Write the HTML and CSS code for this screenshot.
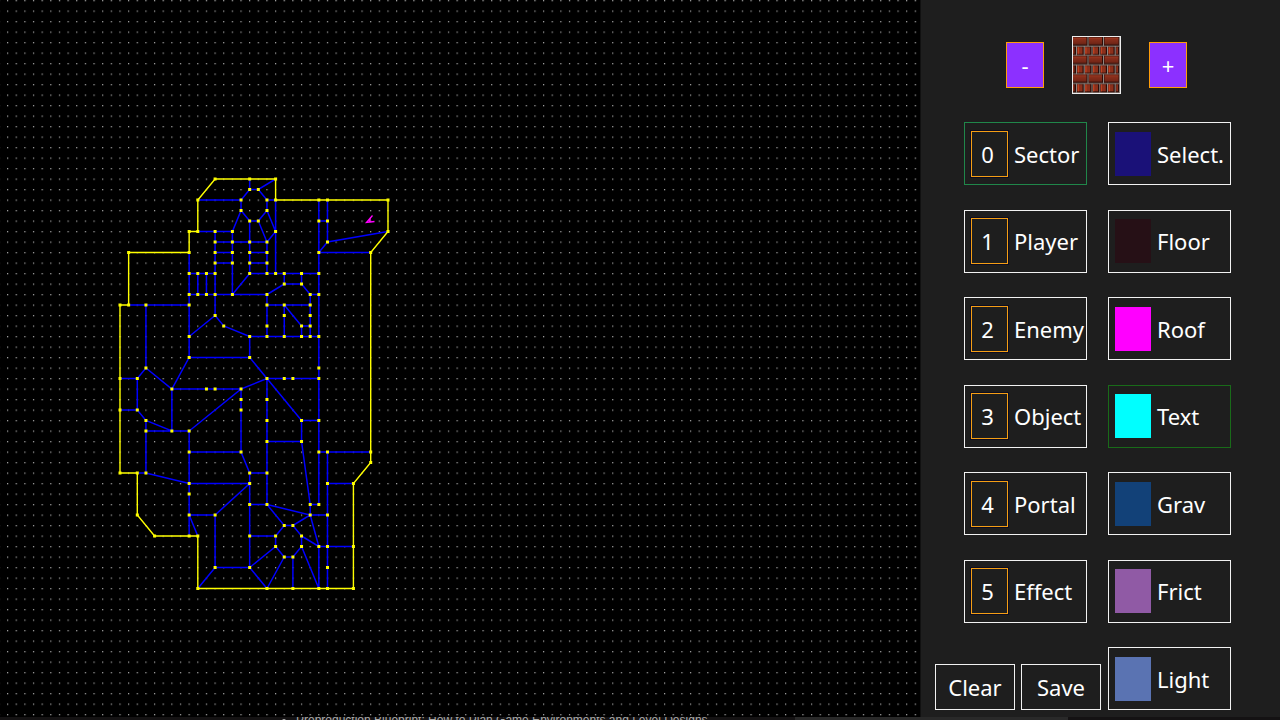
FILE: index.html
```html
<!DOCTYPE html>
<html lang="en">
<head>
<meta charset="utf-8">
<title>Level editor</title>
<link rel="stylesheet" href="styles.css">
</head>
<body>
<div class="editor">
  <main class="map">
    <svg class="map-canvas" role="img" aria-label="Level map">
      <defs>
        <pattern id="grid-dots" width="8.645" height="10.5" patternUnits="userSpaceOnUse" patternTransform="translate(7 0)">
          <rect class="grid-dot" width="1.2" height="1.3"/>
        </pattern>
      </defs>
      <rect width="100%" height="100%" fill="url(#grid-dots)"/>
      <!-- Map coordinates are whole grid cells -->
      <g transform="translate(120 179) scale(8.645 10.5)">
        <path class="portal-line" d="M9 2H14V3L13 5M14 2L15 1M15 0V1H16L18 0M16 1L17 2H18M17 2V3L16 4L17 6M17 3L18 5L17 6M14 3L15 4H16M18 2V9M9 5H13V11M11 5V13M11 6H17M11 7H13M11 8H13M15 4V9H23M15 7H17M15 8H17M17 6V9M15 9L13 11M8 7V17M8 9H11M9 9V11M10 9V11M8 11H17M1 12H8M3 12V18"/>
        <path class="portal-line" d="M23 2V31M24 2V6M23 4H24M31 5L24 6L23 7H29M19 9V10H21V9M19 10L17 11V15M21 10L22 11H23M22 11V15M17 12H22M19 12V15M19 12L21 14H22M21 14V15M15 15H23"/>
        <path class="portal-line" d="M8 15L11 13L12 14L15 15V17L17 19M15 17H8L6 20L3 18L2 19H0M2 19V22H0M2 22L3 23L6 24V20H14L8 24V34M3 23V28M3 24H8M17 19L14 20V26L15 28H17M17 19H23M17 19V31M17 19L21 23H23M21 23V25H17M21 25L22 31"/>
        <path class="portal-line" d="M8 26H14M2 28H3L8 29H15L11 32H8L9 34M11 32V37H15M11 37L9 39M15 28V37M15 31H17M15 34H18M18 35L15 37L17 39M23 26H29M24 26V39M24 29H27M17 31L22 32L20 33H19L17 31M23 31H22V32H24M22 32L23 35H27M19 33L18 34V35L19 36H20L21 35V34L20 33M21 34L23 35V39L21 35M19 36L17 39M20 36V39"/>
        <path class="wall-line" d="M11 0H18V2H31V5L29 7V27L27 29V39H9V34H4L2 32V28H0V12H1V7H8V5H9V2Z"/>
        <path class="vertex" d="M11 0h0M15 0h0M18 0h0M15 1h0M16 1h0M9 2h0M14 2h0M17 2h0M18 2h0M23 2h0M24 2h0M31 2h0M14 3h0M17 3h0M15 4h0M16 4h0M23 4h0M24 4h0M8 5h0M9 5h0M11 5h0M13 5h0M18 5h0M31 5h0M11 6h0M13 6h0M15 6h0M17 6h0M24 6h0M1 7h0M8 7h0M11 7h0M13 7h0M15 7h0M17 7h0M23 7h0M29 7h0M11 8h0M13 8h0M15 8h0M17 8h0M8 9h0M9 9h0M10 9h0M11 9h0M15 9h0M17 9h0M18 9h0M19 9h0M21 9h0M23 9h0M19 10h0M21 10h0M8 11h0M9 11h0M10 11h0M11 11h0M13 11h0M17 11h0M22 11h0M23 11h0"/>
        <path class="vertex" d="M0 12h0M1 12h0M3 12h0M8 12h0M17 12h0M19 12h0M22 12h0M11 13h0M19 13h0M22 13h0M12 14h0M17 14h0M21 14h0M22 14h0M8 15h0M15 15h0M17 15h0M19 15h0M21 15h0M22 15h0M23 15h0M8 17h0M15 17h0M3 18h0M23 18h0M0 19h0M2 19h0M17 19h0M19 19h0M20 19h0M23 19h0M6 20h0M10 20h0M11 20h0M14 20h0M14 21h0M17 21h0M0 22h0M2 22h0M14 22h0M3 23h0M17 23h0M21 23h0M23 23h0M3 24h0M6 24h0M8 24h0M17 25h0M21 25h0"/>
        <path class="vertex" d="M8 26h0M14 26h0M23 26h0M24 26h0M29 26h0M29 27h0M0 28h0M2 28h0M3 28h0M15 28h0M17 28h0M8 29h0M15 29h0M24 29h0M27 29h0M8 30h0M15 31h0M17 31h0M22 31h0M23 31h0M2 32h0M8 32h0M11 32h0M22 32h0M24 32h0M19 33h0M20 33h0M4 34h0M8 34h0M9 34h0M15 34h0M18 34h0M21 34h0M18 35h0M21 35h0M23 35h0M24 35h0M27 35h0M19 36h0M20 36h0M11 37h0M15 37h0M24 37h0M9 39h0M17 39h0M20 39h0M23 39h0M24 39h0M27 39h0"/>
      </g>
      <path class="player" d="M372.500 215.500L366.500 222.500L374.500 221.500M370.500 217.500L369.500 222"/>
    </svg>
  </main>

  <aside class="panel">
    <div class="picker">
      <button class="step" type="button" aria-label="Previous texture">-</button>
      <svg class="texture" viewBox="0 0 47 56" preserveAspectRatio="none" role="img" aria-label="Brick texture">
        <defs>
          <linearGradient id="brick-shade" x2="0" y2="1">
            <stop offset="0" stop-color="#a93c22"/>
            <stop offset=".25" stop-color="#8a2f1c"/>
            <stop offset="1" stop-color="#6f2415"/>
          </linearGradient>
          <pattern id="bricks" width="47" height="18.700" patternUnits="userSpaceOnUse">
            <rect width="47" height="18.700" fill="#8f8782"/>
            <path fill="#2b0c08" d="M0 0H14.500V8.500H0ZM15.500 0H30V8.500H15.500ZM31 0H46V8.500H31ZM0 9.500H3V18H0ZM4 9.500H10.700V18H4ZM11.700 9.500H18.500V18H11.700ZM19.500 9.500H26.300V18H19.500ZM27.300 9.500H34V18H27.300ZM35 9.500H41.700V18H35ZM42.700 9.500H46V18H42.700Z"/>
            <path fill="url(#brick-shade)" d="M0 .5H13.500V7.300H0ZM16 .5H29V7.300H16ZM31.500 .5H45.500V7.300H31.500Z"/>
            <path fill="#8c301b" d="M0 10H1.500V17H0ZM4.500 10H9.500V17H4.500ZM12.200 10H17.200V17H12.200ZM20 10H25V17H20ZM27.800 10H32.800V17H27.800ZM35.500 10H40.500V17H35.500ZM43.200 10H45V17H43.200Z"/>
            <path fill="#c0401f" d="M4.500 10H6V17H4.500ZM12.200 10H13.500V17H12.200ZM20 10H21.300V17H20ZM27.800 10H29V17H27.800ZM35.500 10H37V17H35.500Z"/>
          </pattern>
        </defs>
        <rect width="47" height="56" fill="url(#bricks)"/>
      </svg>
      <button class="step" type="button" aria-label="Next texture">+</button>
    </div>

    <div class="tools">
      <button class="tool mode active" type="button"><span class="key">0</span>Sector</button>
      <button class="tool" type="button"><span class="swatch select"></span>Select.</button>
      <button class="tool mode" type="button"><span class="key">1</span>Player</button>
      <button class="tool" type="button"><span class="swatch floor"></span>Floor</button>
      <button class="tool mode" type="button"><span class="key">2</span>Enemy</button>
      <button class="tool" type="button"><span class="swatch roof"></span>Roof</button>
      <button class="tool mode" type="button"><span class="key">3</span>Object</button>
      <button class="tool enabled" type="button"><span class="swatch text"></span>Text</button>
      <button class="tool mode" type="button"><span class="key">4</span>Portal</button>
      <button class="tool" type="button"><span class="swatch grav"></span>Grav</button>
      <button class="tool mode" type="button"><span class="key">5</span>Effect</button>
      <button class="tool" type="button"><span class="swatch frict"></span>Frict</button>
      <div class="file-actions">
        <button class="action" type="button">Clear</button>
        <button class="action" type="button">Save</button>
      </div>
      <button class="tool" type="button"><span class="swatch light"></span>Light</button>
    </div>
  </aside>

  <footer class="strip">
    <ul class="notes"><li>Preproduction Blueprint: How to Plan Game Environments and Level Designs</li></ul>
    <div class="strip-tab"></div>
  </footer>
</div>
</body>
</html>
```
FILE: styles.css
```css
* {
  box-sizing: border-box;
}

body {
  margin: 0;
  background: #000;
  color: #fff;
  font-family: "Noto Sans", "Open Sans", sans-serif;
  font-size: 22px;
  line-height: 30px;
}

.editor {
  display: grid;
  grid-template: minmax(0, 1fr) 3px / minmax(0, 1fr) 360px;
  height: 100vh;
  overflow: hidden;
}

.map {
  min-width: 0;
  min-height: 0;
}

.map-canvas {
  display: block;
  width: 100%;
  height: 100%;
}

.grid-dot {
  fill: #a0a0a0;
}

.portal-line,
.wall-line,
.vertex,
.player {
  fill: none;
  vector-effect: non-scaling-stroke;
}

.portal-line {
  stroke: #00f;
  stroke-width: 1.5;
}

.wall-line {
  stroke: #ff0;
  stroke-width: 1.4;
}

.vertex {
  stroke: #ff0;
  stroke-width: 3;
  stroke-linecap: square;
}

.player {
  stroke: #f0f;
  stroke-width: 1.3;
}

.panel {
  display: flex;
  flex-direction: column;
  gap: 28px;
  padding: 36px 0 7px 14px;
  border-left: 1px solid #111;
  background: #1e1e1e;
}

.picker {
  display: flex;
  align-items: center;
  gap: 28px;
  padding-left: 71px;
}

button {
  padding: 0;
  border: 1px solid #f2f2f2;
  background: none;
  color: inherit;
  font: inherit;
}

.step {
  width: 38px;
  height: 46px;
  border-color: #ff9d0a;
  background: #8c30ff;
}

.texture {
  width: 49px;
  height: 58px;
  border: 1px solid #eee;
}

.tools {
  display: grid;
  flex: 1;
  grid-template-columns: 166px 123px;
  grid-auto-rows: 63px;
  column-gap: 7px;
  align-content: space-between;
}

.tool {
  display: flex;
  align-items: center;
  gap: 6px;
  width: 123px;
  padding: 0 6px;
  white-space: nowrap;
}

.mode {
  margin-left: 29px;
}

.active {
  border-color: #20874a;
}

.enabled {
  border-color: #196b19;
}

.key {
  display: grid;
  flex: none;
  place-items: center;
  width: 37px;
  height: 46px;
  padding-right: 4px;
  border: 1px solid #f59e14;
  outline: 1px solid #0c0c20;
}

.swatch {
  flex: none;
  width: 36px;
  height: 44px;
}

.select { background: #1a1178; }
.floor { background: #261016; }
.roof { background: #f0f; }
.text { background: #0ff; }
.grav { background: #124178; }
.frict { background: #905aa5; }
.light { background: #5a73b2; }

.file-actions {
  display: flex;
  align-items: end;
  gap: 6px;
}

.action {
  flex: 1;
  height: 46px;
}

.strip {
  display: flex;
  grid-column: 1 / -1;
  overflow: hidden;
  background: #141213;
}

.notes {
  flex: none;
  width: 795px;
  margin: 0;
  padding-left: 296px;
  color: #aaa;
  font: 12px/6px "Liberation Sans", sans-serif;
  white-space: nowrap;
}

.strip-tab {
  flex: none;
  width: 273px;
  background: #292929;
}
```
